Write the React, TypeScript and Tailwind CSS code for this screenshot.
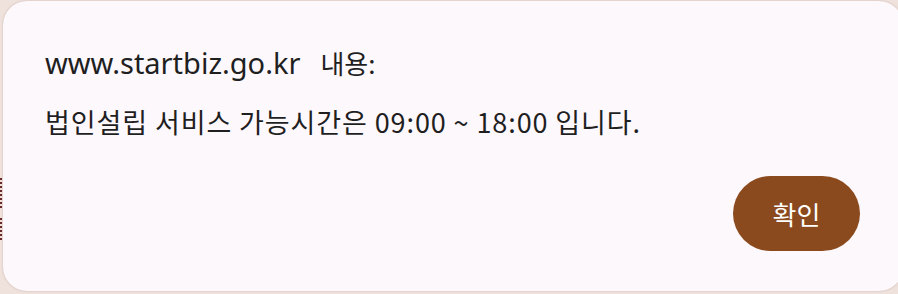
const DOTS = [178, 182, 186, 190, 194, 198, 202, 206, 218, 222, 226, 230, 234, 238];

export default function App() {
  return (
    <div className="flex h-[294px] w-[898px] overflow-hidden bg-[#efe1dc] font-['Noto_Sans_CJK_KR',sans-serif]">
      <div className="relative w-[3px] shrink-0">
        {DOTS.map((y) => (
          <div key={y} className="absolute left-0 h-[2px] w-[2px] bg-[#6b2a2a]" style={{ top: y }} />
        ))}
      </div>
      <div className="mt-[1px] flex h-[290px] w-[900px] shrink-0 flex-col rounded-[24px] bg-[#fdf8fc] pl-[42px] pr-[41px] text-[#1f1f1f] shadow-[0_0_2px_rgba(120,80,70,0.35)]">
        <h1 className="mt-[44px] font-['Noto_Sans','Noto_Sans_CJK_KR',sans-serif] text-[29px] leading-[36px]">
          www.startbiz.go.kr
          <span className="ml-[20px] font-['Noto_Sans_CJK_KR',sans-serif] text-[26px]">내용:</span>
        </h1>
        <p className="mt-[25px] text-[27px] leading-[32px] tracking-[0.9px]">
          법인설립 서비스 가능시간은 09:00 ~ 18:00 입니다.
        </p>
        <div className="mt-[38px] flex justify-end pr-[2px]">
          <button className="h-[75px] w-[127px] rounded-full bg-[#8b4a1e] text-[26px] leading-none text-white">확인</button>
        </div>
      </div>
    </div>
  );
}
